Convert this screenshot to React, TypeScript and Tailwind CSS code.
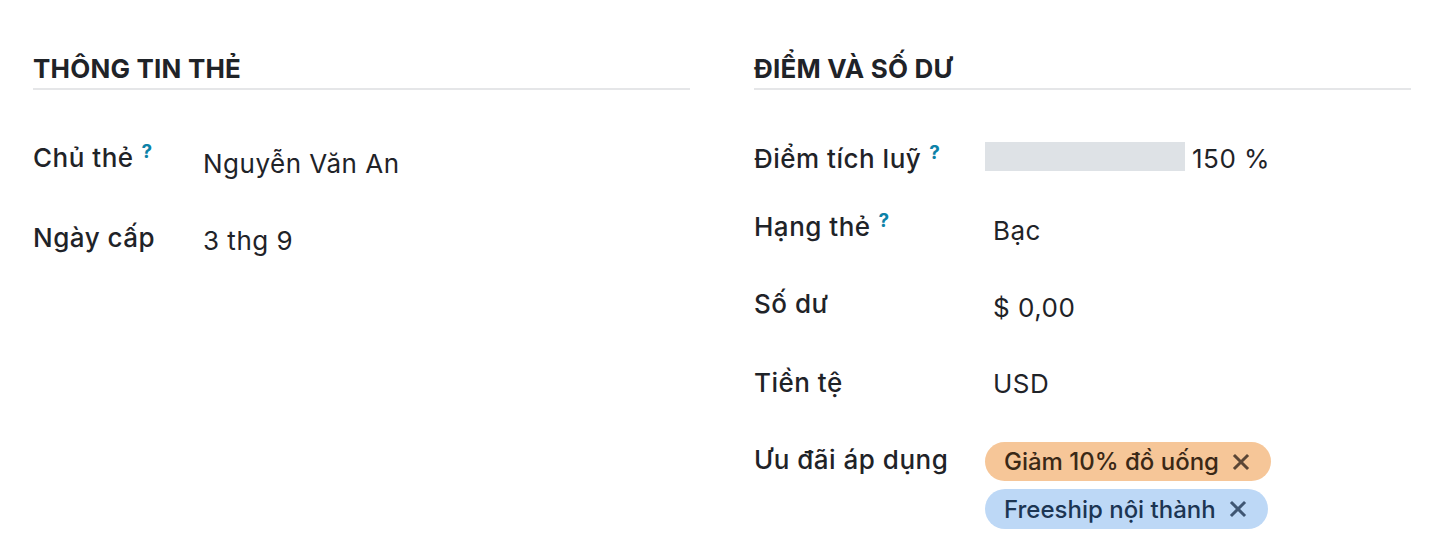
import React from "react";

const Q = () => (
  <span className="ml-[8px] inline-block align-top text-[19px] font-bold leading-none tracking-normal text-[#0d82a8] relative top-[4px]">?</span>
);

const Label = ({ children, help }: { children: React.ReactNode; help?: boolean }) => (
  <div className="font-medium leading-[39px] whitespace-nowrap">
    {children}
    {help && <Q />}
  </div>
);

const X = ({ color }: { color: string }) => (
  <svg width="18" height="18" viewBox="0 0 18 18" className="ml-[13px] shrink-0">
    <path d="M3 3 L15 15 M15 3 L3 15" stroke={color} strokeWidth="3" strokeLinecap="square" />
  </svg>
);

const Heading = ({ children }: { children: React.ReactNode }) => (
  <div className="border-b-2 border-[#e5e6e8] text-[26px] font-bold leading-[39px] tracking-[0.2px]">{children}</div>
);

export default function App() {
  return (
    <div
      className="w-[1444px] h-[552px] bg-white text-[#1f2328] text-[26px] overflow-hidden"
      style={{ fontFamily: "Inter, 'Noto Sans', sans-serif" }}
    >
      <div className="grid grid-cols-2 gap-x-[64px] px-[33px] pt-[49px]">
        {/* Left */}
        <div>
          <Heading>THÔNG TIN THẺ</Heading>
          <div className="pt-[48px] tracking-[0.5px]">
            <div className="flex h-[80px]">
              <div className="w-[170px]">
                <Label help>Chủ thẻ</Label>
              </div>
              <div className="pt-[6px] leading-[39px]">Nguyễn Văn An</div>
            </div>
            <div className="flex h-[80px]">
              <div className="w-[170px]">
                <Label>Ngày cấp</Label>
              </div>
              <div className="pt-[3px] leading-[39px]">3 thg 9</div>
            </div>
          </div>
        </div>

        {/* Right */}
        <div>
          <Heading>ĐIỂM VÀ SỐ DƯ</Heading>
          <div className="pt-[49px] tracking-[0.5px]">
            <div className="flex h-[68px]">
              <div className="w-[231px]">
                <Label help>Điểm tích luỹ</Label>
              </div>
              <div className="flex items-start">
                <div className="mt-[3px] h-[29px] w-[200px] bg-[#dee2e6]" />
                <div className="ml-[7px] leading-[39px]">150 %</div>
              </div>
            </div>
            <div className="flex h-[77px]">
              <div className="w-[239px]">
                <Label help>Hạng thẻ</Label>
              </div>
              <div className="pt-[4px] leading-[39px]">Bạc</div>
            </div>
            <div className="flex h-[79px]">
              <div className="w-[239px]">
                <Label>Số dư</Label>
              </div>
              <div className="pt-[4px] leading-[39px]">$ 0,00</div>
            </div>
            <div className="flex h-[77px]">
              <div className="w-[239px]">
                <Label>Tiền tệ</Label>
              </div>
              <div className="pt-[1px] leading-[39px]">USD</div>
            </div>
            <div className="flex">
              <div className="w-[231px]">
                <Label>Ưu đãi áp dụng</Label>
              </div>
              <div className="flex flex-col items-start gap-[8px] pt-[2px] tracking-normal">
                <div className="flex h-[39px] items-center rounded-full bg-[#f6c698] pl-[19px] pr-[21px] text-[24px] font-medium text-[#3a2816]">
                  <span className="leading-[39px]">Giảm 10% đồ uống</span>
                  <X color="#5b4636" />
                </div>
                <div className="flex h-[40px] items-center rounded-full bg-[#bdd8f6] pl-[19px] pr-[21px] text-[24px] font-medium text-[#1c3553]">
                  <span className="leading-[39px]">Freeship nội thành</span>
                  <X color="#3f5673" />
                </div>
              </div>
            </div>
          </div>
        </div>
      </div>
    </div>
  );
}
